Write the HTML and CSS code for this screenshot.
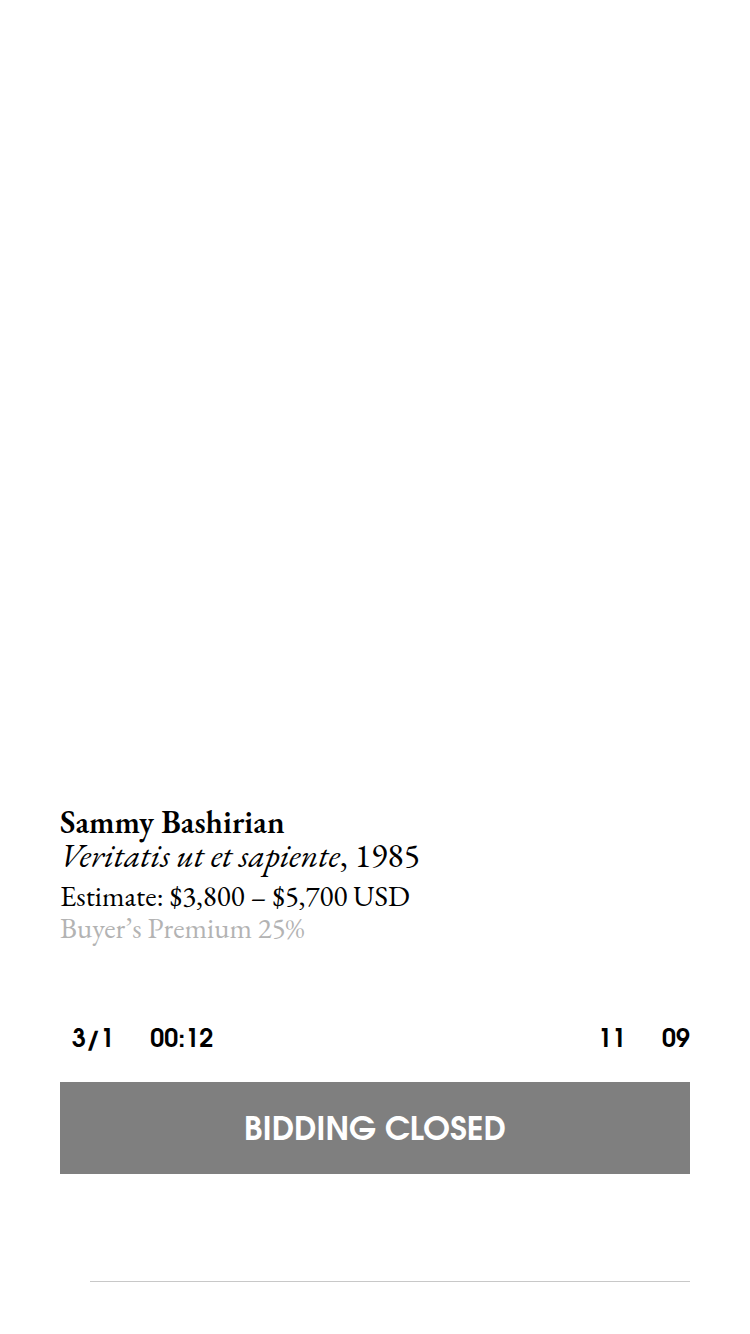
FILE: index.html
```html
<!DOCTYPE html>
<html lang="en">
<head>
<meta charset="utf-8">
<meta name="viewport" content="width=device-width, initial-scale=1">
<title>Sammy Bashirian – Lot</title>
<link rel="stylesheet" href="styles.css">
</head>
<body>
<main class="lot">
  <div class="artwork"></div>
  <section class="details">
    <h1 class="artist">Sammy Bashirian</h1>
    <p class="title"><em>Veritatis ut et sapiente</em>, 1985</p>
    <p class="estimate">Estimate: $3,800 – $5,700 USD</p>
    <p class="premium">Buyer’s Premium 25%</p>
  </section>
  <div class="stats">
    <div class="group"><span>3/1</span><span>00:12</span></div>
    <div class="group"><span>11</span><span>09</span></div>
  </div>
  <button class="bid" type="button" disabled>BIDDING CLOSED</button>
  <hr class="divider">
</main>
</body>
</html>
```

FILE: styles.css
```css
* {
  box-sizing: border-box;
}

body {
  margin: 0;
  background: #fff;
  color: #000;
  font-family: "EB Garamond", "Liberation Serif", serif;
  font-variant-numeric: lining-nums tabular-nums;
}

.lot {
  display: flex;
  flex-direction: column;
  min-height: 100vh;
  padding: 0 60px 52px;
}

.artwork {
  flex: 1;
}

.artist,
.title,
.estimate,
.premium {
  margin: 0;
  font-weight: 400;
  line-height: 32px;
}

.artist {
  font-size: 32px;
  font-weight: 600;
}

.title {
  font-size: 34px;
  line-height: 34px;
}

.estimate,
.premium {
  font-size: 29px;
}

.estimate {
  margin-top: 8px;
}

.premium {
  color: #b3b3b3;
}

.stats {
  display: flex;
  justify-content: space-between;
  margin: 83px 0 27px;
  padding-left: 12px;
  font: 600 25px/28px "ITC Avant Garde Gothic", "URW Gothic", "TeX Gyre Adventor", "League Spartan", Jost, Poppins, Montserrat, "Liberation Sans", sans-serif;
}

.group {
  display: flex;
  gap: 36px;
}

.bid {
  padding: 31px 16px 25px;
  border: 0;
  background: #7f7f7f;
  color: #fff;
  font: 600 32px/36px "ITC Avant Garde Gothic", "URW Gothic", "TeX Gyre Adventor", "League Spartan", Jost, Poppins, Montserrat, "Liberation Sans", sans-serif;
}

.divider {
  width: calc(100% - 30px);
  margin: 107px 0 0 30px;
  border: 0;
  border-top: 1px solid #c8c8c8;
}
```
